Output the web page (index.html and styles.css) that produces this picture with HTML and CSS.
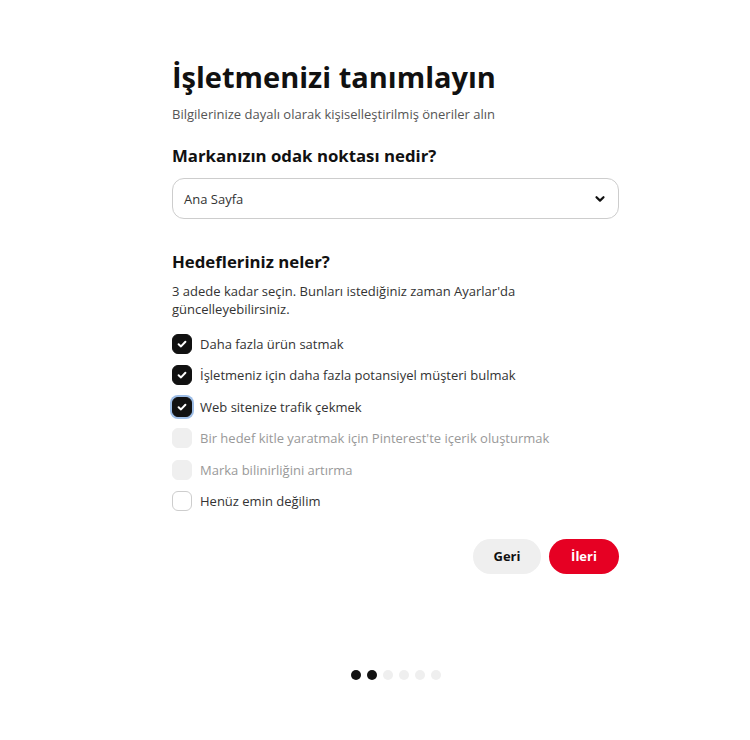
FILE: index.html
```html
<!DOCTYPE html>
<html lang="tr">
<head>
<meta charset="utf-8">
<link rel="stylesheet" href="styles.css">
</head>
<body>
<div class="page">
  <main class="form">
    <h1 class="title">İşletmenizi tanımlayın</h1>
    <p class="subtitle">Bilgilerinize dayalı olarak kişiselleştirilmiş öneriler alın</p>

    <h2 class="question q1">Markanızın odak noktası nedir?</h2>
    <div class="select">
      <span class="select-value">Ana Sayfa</span>
      <svg class="chevron" width="12" height="12" viewBox="0 0 12 12"><path d="M2.5 4.2 L6 7.6 L9.5 4.2" fill="none" stroke="#111" stroke-width="2.2" stroke-linecap="round" stroke-linejoin="round"/></svg>
    </div>

    <h2 class="question q2">Hedefleriniz neler?</h2>
    <p class="desc">3 adede kadar seçin. Bunları istediğiniz zaman Ayarlar'da güncelleyebilirsiniz.</p>

    <ul class="options">
      <li class="option checked"><span class="box"><svg width="12" height="12" viewBox="0 0 12 12"><path d="M2.6 6.2 L5 8.4 L9.4 3.8" fill="none" stroke="#fff" stroke-width="2" stroke-linecap="round" stroke-linejoin="round"/></svg></span><span class="label">Daha fazla ürün satmak</span></li>
      <li class="option checked"><span class="box"><svg width="12" height="12" viewBox="0 0 12 12"><path d="M2.6 6.2 L5 8.4 L9.4 3.8" fill="none" stroke="#fff" stroke-width="2" stroke-linecap="round" stroke-linejoin="round"/></svg></span><span class="label">İşletmeniz için daha fazla potansiyel müşteri bulmak</span></li>
      <li class="option checked focused"><span class="box"><svg width="12" height="12" viewBox="0 0 12 12"><path d="M2.6 6.2 L5 8.4 L9.4 3.8" fill="none" stroke="#fff" stroke-width="2" stroke-linecap="round" stroke-linejoin="round"/></svg></span><span class="label">Web sitenize trafik çekmek</span></li>
      <li class="option disabled"><span class="box"></span><span class="label">Bir hedef kitle yaratmak için Pinterest'te içerik oluşturmak</span></li>
      <li class="option disabled"><span class="box"></span><span class="label">Marka bilinirliğini artırma</span></li>
      <li class="option"><span class="box"></span><span class="label">Henüz emin değilim</span></li>
    </ul>

    <div class="actions">
      <button class="btn btn-back">Geri</button>
      <button class="btn btn-next">İleri</button>
    </div>

    <div class="dots">
      <span class="dot on"></span>
      <span class="dot on"></span>
      <span class="dot"></span>
      <span class="dot"></span>
      <span class="dot"></span>
      <span class="dot"></span>
    </div>
  </main>
</div>
</body>
</html>
```
FILE: styles.css
```css
* { box-sizing: border-box; }
html, body { margin: 0; padding: 0; background: #fff; }
body {
  font-family: "Open Sans", "Noto Sans", "Liberation Sans", sans-serif;
  color: #111;
  width: 750px;
  height: 740px;
  overflow: hidden;
}
.page {
  padding: 57px 0 0 172px;
}
.form {
  width: 447px;
}
.title {
  margin: 0;
  font-size: 29px;
  font-weight: 700;
  line-height: 40px;
}
.subtitle {
  margin: 8px 0 0;
  font-size: 13px;
  line-height: 18px;
  color: #555;
}
.question {
  margin: 0;
  font-size: 16.8px;
  font-weight: 700;
  line-height: 22px;
}
.q1 { margin-top: 22px; }
.select {
  margin-top: 11px;
  height: 41px;
  border: 1px solid #cdcdcd;
  border-radius: 12px;
  display: flex;
  align-items: center;
  justify-content: space-between;
  padding: 0 12px 0 11px;
}
.select-value {
  font-size: 13px;
  color: #333;
}
.q2 { margin-top: 32px; }
.desc {
  margin: 9px 0 0;
  font-size: 13px;
  line-height: 18px;
  color: #333;
  width: 400px;
}
.options {
  list-style: none;
  margin: 16px 0 0;
  padding: 0;
  display: flex;
  flex-direction: column;
  gap: 11.4px;
}
.option {
  display: flex;
  align-items: center;
  gap: 8px;
  height: 20px;
}
.box {
  width: 20px;
  height: 20px;
  border-radius: 6px;
  border: 1px solid #cdcdcd;
  background: #fff;
  display: flex;
  align-items: center;
  justify-content: center;
  flex: none;
}
.checked .box { background: #111; border-color: #111; }
.focused .box { box-shadow: 0 0 0 2px #9dbde6; }
.disabled .box { background: #efefef; border-color: #efefef; }
.label { font-size: 13px; color: #333; }
.disabled .label { color: #999; }
.actions {
  margin-top: 28px;
  display: flex;
  justify-content: flex-end;
  gap: 8px;
}
.btn {
  border: none;
  height: 35px;
  border-radius: 18px;
  font-family: inherit;
  font-size: 13px;
  font-weight: 700;
  padding: 0;
}
.btn-back { width: 68px; background: #efefef; color: #111; }
.btn-next { width: 70px; background: #e60023; color: #fff; }
.dots {
  margin-top: 96px;
  display: flex;
  justify-content: center;
  gap: 6px;
}
.dot {
  width: 10px;
  height: 10px;
  border-radius: 50%;
  background: #efefef;
}
.dot.on { background: #111; }
```
